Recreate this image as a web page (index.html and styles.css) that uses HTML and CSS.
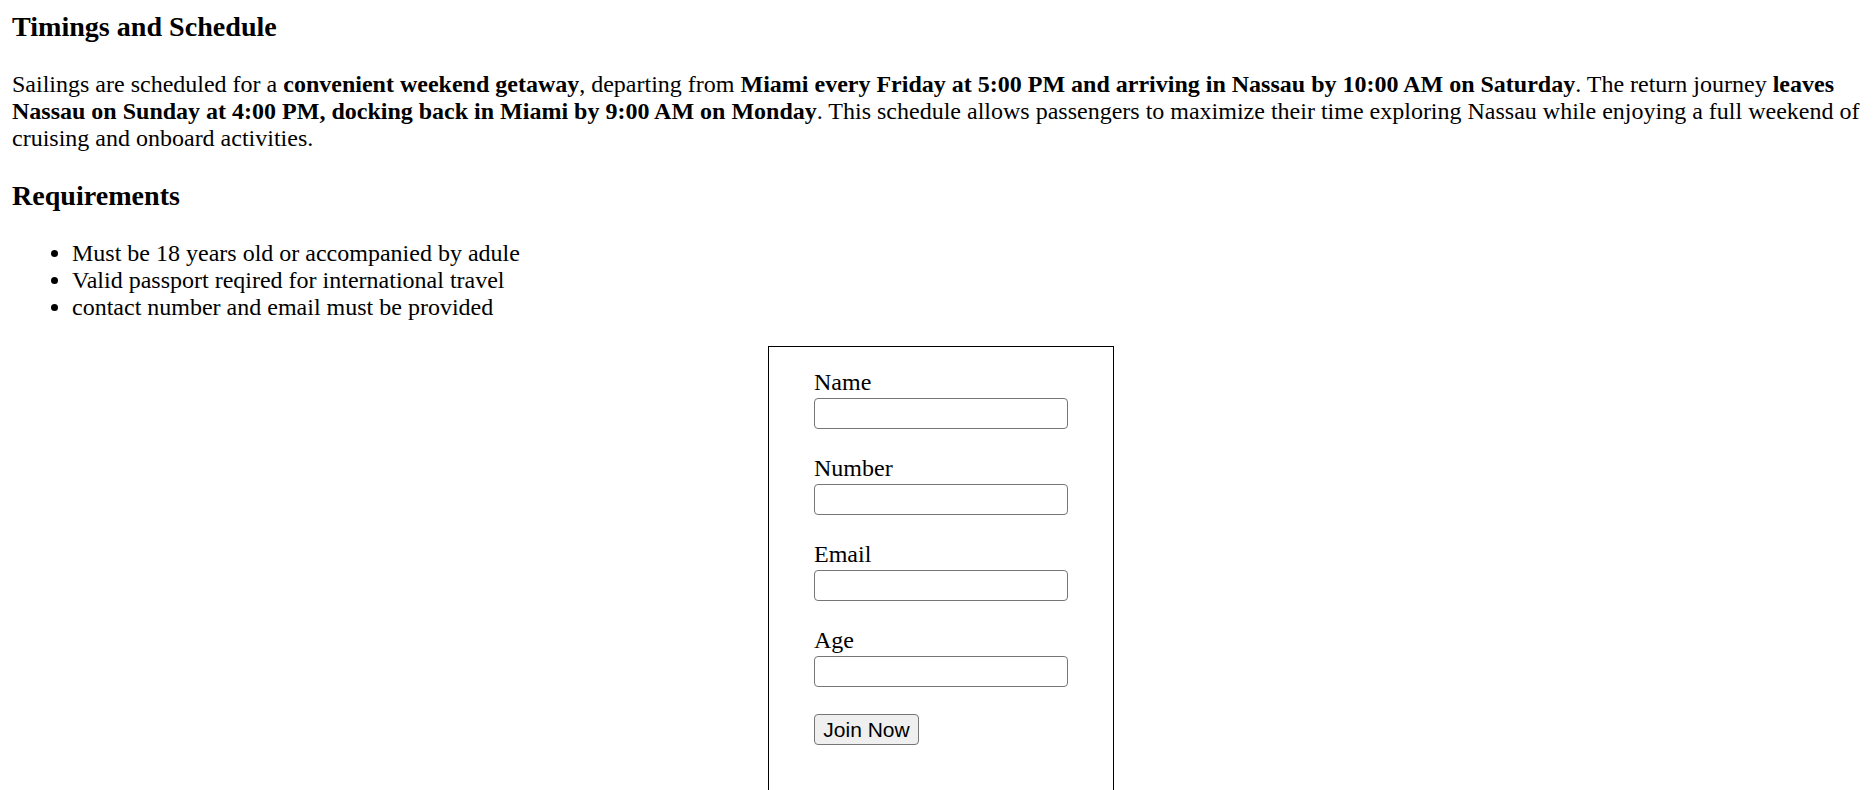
FILE: index.html
```html
<!DOCTYPE html>
<html lang="en">
<head>
<meta charset="utf-8">
<title>Timings and Schedule</title>
<link rel="stylesheet" href="styles.css">
</head>
<body>
  <section class="info">
    <h3 class="info-title info-title--first">Timings and Schedule</h3>
    <p class="info-text">Sailings are scheduled for a <b>convenient weekend getaway</b>, departing from <b>Miami every Friday at 5:00 PM and arriving in Nassau by 10:00 AM on Saturday</b>. The return journey <b>leaves Nassau on Sunday at 4:00 PM, docking back in Miami by 9:00 AM on Monday</b>. This schedule allows passengers to maximize their time exploring Nassau while enjoying a full weekend of cruising and onboard activities.</p>
    <h3 class="info-title">Requirements</h3>
    <ul class="req-list">
      <li>Must be 18 years old or accompanied by adule</li>
      <li>Valid passport reqired for international travel</li>
      <li>contact number and email must be provided</li>
    </ul>
  </section>
  <form class="signup">
    <div class="field">
      <label class="field-label" for="name">Name</label>
      <input class="field-input" id="name" type="text">
    </div>
    <div class="field">
      <label class="field-label" for="number">Number</label>
      <input class="field-input" id="number" type="text">
    </div>
    <div class="field">
      <label class="field-label" for="email">Email</label>
      <input class="field-input" id="email" type="email">
    </div>
    <div class="field">
      <label class="field-label" for="age">Age</label>
      <input class="field-input" id="age" type="text">
    </div>
    <button class="join-btn" type="submit">Join Now</button>
  </form>
</body>
</html>
```

FILE: styles.css
```css
html, body {
  background: #ffffff;
}

body {
  margin: 10.5px 12px 12px;
  font-family: "Liberation Serif", "Times New Roman", serif;
  font-size: 24px;
  color: #000000;
}

.info-title {
  font-size: 28.08px;
  font-weight: bold;
  margin: 28px 0;
}

.info-title--first {
  margin-top: 0;
}

.info-text {
  margin: 24px 0;
}

.req-list {
  margin: 24px 0;
  padding-left: 60px;
}

.signup {
  box-sizing: border-box;
  width: 346px;
  margin: 25.5px 0 0 756px;
  padding: 22px 45px 60px;
  border: 1px solid #000000;
  display: flex;
  flex-direction: column;
  align-items: flex-start;
}

.field {
  display: flex;
  flex-direction: column;
  align-items: flex-start;
  margin-bottom: 26.5px;
}

.field-label {
  line-height: 27px;
}

.field-input {
  box-sizing: border-box;
  width: 254px;
  height: 31px;
  margin: 1.5px 0 0;
  padding: 1px 3px;
  border: 1px solid #767676;
  border-radius: 4px;
  background: #ffffff;
  font-family: "Liberation Sans", Arial, sans-serif;
  font-size: 20px;
}

.join-btn {
  box-sizing: border-box;
  width: 105px;
  height: 31px;
  margin-top: 1px;
  padding: 0;
  border: 1px solid #767676;
  border-radius: 4px;
  background: #efefef;
  color: #000000;
  font-family: "Liberation Sans", Arial, sans-serif;
  font-size: 21px;
  line-height: 1;
  text-align: center;
}
```
